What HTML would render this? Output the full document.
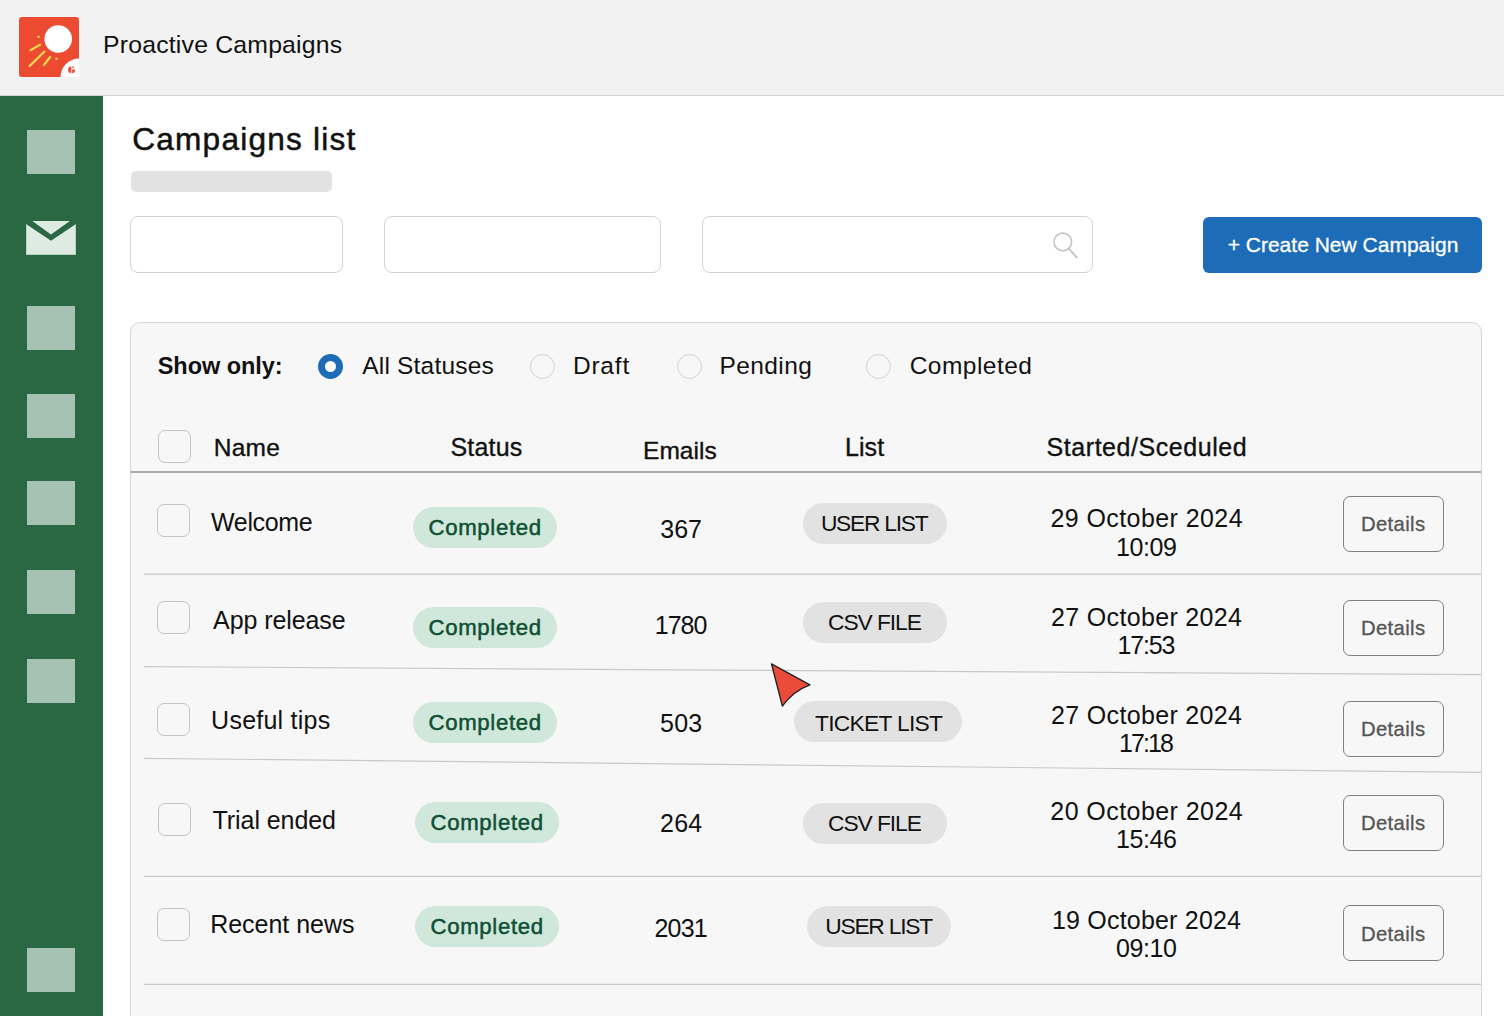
<!DOCTYPE html>
<html><head><meta charset="utf-8"><style>
html,body{margin:0;padding:0;}
body{width:1504px;height:1016px;position:relative;overflow:hidden;background:#fff;font-family:"Liberation Sans",sans-serif;}
body>div{position:absolute;}
.t{white-space:nowrap;line-height:1;}
</style></head><body>
<div style="left:0px;top:0px;width:1504px;height:95px;background:#F2F2F2;"></div>
<div style="left:0px;top:95px;width:1504px;height:1px;background:#D3D3D3;"></div>
<svg style="position:absolute;left:19px;top:17px" width="60" height="60" viewBox="0 0 60 60">
<path d="M3 0 H57 A3 3 0 0 1 60 3 V60 H3 A3 3 0 0 1 0 57 V3 A3 3 0 0 1 3 0 Z" fill="#EC4A31"/>
<circle cx="39.2" cy="22" r="13.8" fill="#fff"/>
<path d="M60 41.5 A18.5 18.5 0 0 0 41.5 60 L60 60 Z" fill="#fff"/>
<g stroke="#FCD94A" stroke-width="2.2" stroke-linecap="round">
<line x1="19.3" y1="19.8" x2="19.7" y2="19.8"/>
<line x1="11.5" y1="33.2" x2="21.2" y2="27.6"/>
<line x1="10.5" y1="49.1" x2="25.3" y2="34.7"/>
<line x1="24.9" y1="48.2" x2="31.2" y2="39.9"/>
<line x1="37.3" y1="41.7" x2="37.7" y2="41.8"/>
</g>
<circle cx="52.6" cy="52.7" r="3.5" fill="#EC4A31"/>
<rect x="52.3" y="48.8" width="0.8" height="8" fill="#fff"/>
<path d="M53.1 50.4 L57 51.2 L57 52.6 L53.1 52.6 Z" fill="#fff"/>
</svg>
<div class="t" style="left:103.00px;top:33.30px;font-size:24.8px;color:#111;letter-spacing:0.194px;">Proactive Campaigns</div>
<div style="left:0px;top:96px;width:103px;height:920px;background:#2A6843;"></div>
<div style="left:27px;top:130px;width:48px;height:44px;background:#A6C2B3;"></div>
<div style="left:27px;top:306px;width:48px;height:44px;background:#A6C2B3;"></div>
<div style="left:27px;top:394px;width:48px;height:44px;background:#A6C2B3;"></div>
<div style="left:27px;top:481px;width:48px;height:44px;background:#A6C2B3;"></div>
<div style="left:27px;top:570px;width:48px;height:44px;background:#A6C2B3;"></div>
<div style="left:27px;top:659px;width:48px;height:44px;background:#A6C2B3;"></div>
<div style="left:27px;top:948px;width:48px;height:44px;background:#A6C2B3;"></div>
<svg style="position:absolute;left:26px;top:220px" width="50" height="36" viewBox="0 0 50 36">
<rect x="0.2" y="1" width="49.6" height="33.8" fill="#DDEBE3"/>
<path d="M0 1 L6.3 1 L25 14.4 L43.9 1 L50 1 L50 4.1 L25 20.8 L0 4.1 Z" fill="#2A6843"/>
</svg>
<div class="t" style="left:132.25px;top:123.54px;font-size:31.6px;color:#111;letter-spacing:1.221px;-webkit-text-stroke:0.5px #111;">Campaigns list</div>
<div style="left:131px;top:171px;width:201px;height:21px;background:#E2E2E2;border-radius:5px;"></div>
<div style="left:130px;top:216px;width:213px;height:57px;box-sizing:border-box;border:1px solid #D2D2D2;border-radius:8px;background:#fff;"></div>
<div style="left:384px;top:216px;width:277px;height:57px;box-sizing:border-box;border:1px solid #D2D2D2;border-radius:8px;background:#fff;"></div>
<div style="left:702px;top:216px;width:391px;height:57px;box-sizing:border-box;border:1px solid #D2D2D2;border-radius:8px;background:#fff;"></div>
<svg style="position:absolute;left:1048px;top:228px" width="34" height="34" viewBox="1048 228 34 34">
<circle cx="1062.8" cy="241.9" r="8.8" fill="none" stroke="#C4C4C4" stroke-width="1.6"/>
<line x1="1068.9" y1="248.6" x2="1077" y2="257.6" stroke="#C4C4C4" stroke-width="1.8" stroke-linecap="round"/>
</svg>
<div style="left:1203px;top:217px;width:279px;height:56px;background:#1D6CB7;border-radius:6px;"></div>
<div class="t" style="left:1227.65px;top:234.22px;font-size:21px;color:#fff;letter-spacing:0.008px;-webkit-text-stroke:0.3px #fff;">+ Create New Campaign</div>
<div style="left:130px;top:322px;width:1352px;height:760px;box-sizing:border-box;border:1px solid #D6D6D6;border-radius:10px;background:#F7F7F7;"></div>
<div class="t" style="left:157.70px;top:355.00px;font-size:23.5px;color:#111;font-weight:bold;letter-spacing:-0.036px;">Show only:</div>
<div style="left:318.0px;top:353.8px;width:25px;height:25px;box-sizing:border-box;border-radius:50%;border:7.6px solid #1D6CB7;background:#fff;"></div>
<div class="t" style="left:362.30px;top:353.86px;font-size:24.5px;color:#111;letter-spacing:0.185px;">All Statuses</div>
<div style="left:530.0px;top:353.8px;width:25px;height:25px;box-sizing:border-box;border-radius:50%;border:1px solid #D2D2D2;background:#F7F7F7;"></div>
<div class="t" style="left:572.90px;top:353.86px;font-size:24.5px;color:#111;letter-spacing:0.802px;">Draft</div>
<div style="left:677.0px;top:353.8px;width:25px;height:25px;box-sizing:border-box;border-radius:50%;border:1px solid #D2D2D2;background:#F7F7F7;"></div>
<div class="t" style="left:719.60px;top:353.86px;font-size:24.5px;color:#111;letter-spacing:0.381px;">Pending</div>
<div style="left:865.9px;top:353.8px;width:25px;height:25px;box-sizing:border-box;border-radius:50%;border:1px solid #D2D2D2;background:#F7F7F7;"></div>
<div class="t" style="left:909.70px;top:353.86px;font-size:24.5px;color:#111;letter-spacing:0.477px;">Completed</div>
<div style="left:158px;top:430px;width:33px;height:33px;box-sizing:border-box;border:1px solid #C4C4C4;border-radius:7px;"></div>
<div class="t" style="left:213.78px;top:435.76px;font-size:24.5px;color:#111;letter-spacing:0.261px;-webkit-text-stroke:0.35px #111;">Name</div>
<div class="t" style="left:450.38px;top:435.33px;font-size:25px;color:#111;letter-spacing:0.215px;-webkit-text-stroke:0.35px #111;">Status</div>
<div class="t" style="left:642.97px;top:438.76px;font-size:24.5px;color:#111;letter-spacing:0.065px;-webkit-text-stroke:0.35px #111;">Emails</div>
<div class="t" style="left:844.88px;top:434.73px;font-size:25px;color:#111;letter-spacing:0.117px;-webkit-text-stroke:0.35px #111;">List</div>
<div class="t" style="left:1046.58px;top:434.73px;font-size:25px;color:#111;letter-spacing:0.550px;-webkit-text-stroke:0.35px #111;">Started/Sceduled</div>
<div style="left:131px;top:471px;width:1350px;height:2px;background:#A9A9A9;"></div>
<div style="left:157px;top:504px;width:33px;height:33px;box-sizing:border-box;border:1px solid #C4C4C4;border-radius:7px;"></div>
<div class="t" style="left:211.10px;top:509.73px;font-size:25px;color:#111;letter-spacing:-0.371px;">Welcome</div>
<div style="left:413px;top:507px;width:144px;height:41px;background:#D0E7DB;border-radius:21px;"></div>
<div class="t" style="left:428.45px;top:516.90px;font-size:22.2px;color:#0F5032;letter-spacing:0.668px;-webkit-text-stroke:0.5px #0F5032;">Completed</div>
<div class="t" style="left:660.25px;top:516.83px;font-size:25px;color:#111;letter-spacing:0.000px;">367</div>
<div style="left:803px;top:503px;width:144px;height:41px;background:#E2E2E2;border-radius:21px;"></div>
<div class="t" style="left:820.90px;top:512.20px;font-size:22.8px;color:#111;letter-spacing:-1.254px;">USER LIST</div>
<div class="t" style="left:1050.40px;top:506.03px;font-size:25px;color:#111;letter-spacing:0.425px;">29 October 2024</div>
<div class="t" style="left:1116.00px;top:534.73px;font-size:25px;color:#111;letter-spacing:-0.412px;">10:09</div>
<div style="left:1343px;top:496px;width:101px;height:56px;box-sizing:border-box;border:1px solid #808080;border-radius:7px;"></div>
<div class="t" style="left:1360.90px;top:514.11px;font-size:20.3px;color:#555555;letter-spacing:0.357px;-webkit-text-stroke:0.3px #555555;">Details</div>
<div style="left:157px;top:601px;width:33px;height:33px;box-sizing:border-box;border:1px solid #C4C4C4;border-radius:7px;"></div>
<div class="t" style="left:213.10px;top:607.73px;font-size:25px;color:#111;letter-spacing:-0.082px;">App release</div>
<div style="left:413px;top:607px;width:144px;height:41px;background:#D0E7DB;border-radius:21px;"></div>
<div class="t" style="left:428.45px;top:617.20px;font-size:22.2px;color:#0F5032;letter-spacing:0.668px;-webkit-text-stroke:0.5px #0F5032;">Completed</div>
<div class="t" style="left:654.80px;top:613.13px;font-size:25px;color:#111;letter-spacing:-1.008px;">1780</div>
<div style="left:803px;top:602px;width:144px;height:41px;background:#E2E2E2;border-radius:21px;"></div>
<div class="t" style="left:828.05px;top:611.20px;font-size:22.8px;color:#111;letter-spacing:-1.067px;">CSV FILE</div>
<div class="t" style="left:1051.05px;top:605.08px;font-size:25px;color:#111;letter-spacing:0.332px;">27 October 2024</div>
<div class="t" style="left:1117.55px;top:633.23px;font-size:25px;color:#111;letter-spacing:-1.188px;">17:53</div>
<div style="left:1343px;top:600px;width:101px;height:56px;box-sizing:border-box;border:1px solid #808080;border-radius:7px;"></div>
<div class="t" style="left:1360.90px;top:618.21px;font-size:20.3px;color:#555555;letter-spacing:0.357px;-webkit-text-stroke:0.3px #555555;">Details</div>
<div style="left:157px;top:703px;width:33px;height:33px;box-sizing:border-box;border:1px solid #C4C4C4;border-radius:7px;"></div>
<div class="t" style="left:211.10px;top:707.73px;font-size:25px;color:#111;letter-spacing:0.240px;">Useful tips</div>
<div style="left:413px;top:702px;width:144px;height:41px;background:#D0E7DB;border-radius:21px;"></div>
<div class="t" style="left:428.45px;top:711.90px;font-size:22.2px;color:#0F5032;letter-spacing:0.668px;-webkit-text-stroke:0.5px #0F5032;">Completed</div>
<div class="t" style="left:660.00px;top:711.33px;font-size:25px;color:#111;letter-spacing:0.250px;">503</div>
<div style="left:794px;top:701px;width:168px;height:41px;background:#E2E2E2;border-radius:21px;"></div>
<div class="t" style="left:815.05px;top:712.20px;font-size:22.8px;color:#111;letter-spacing:-0.724px;">TICKET LIST</div>
<div class="t" style="left:1051.00px;top:702.83px;font-size:25px;color:#111;letter-spacing:0.339px;">27 October 2024</div>
<div class="t" style="left:1119.08px;top:731.03px;font-size:25px;color:#111;letter-spacing:-1.950px;">17:18</div>
<div style="left:1343px;top:701px;width:101px;height:56px;box-sizing:border-box;border:1px solid #808080;border-radius:7px;"></div>
<div class="t" style="left:1360.90px;top:719.21px;font-size:20.3px;color:#555555;letter-spacing:0.357px;-webkit-text-stroke:0.3px #555555;">Details</div>
<div style="left:158px;top:803px;width:33px;height:33px;box-sizing:border-box;border:1px solid #C4C4C4;border-radius:7px;"></div>
<div class="t" style="left:212.60px;top:807.73px;font-size:25px;color:#111;letter-spacing:-0.075px;">Trial ended</div>
<div style="left:415px;top:802px;width:144px;height:41px;background:#D0E7DB;border-radius:21px;"></div>
<div class="t" style="left:430.45px;top:811.90px;font-size:22.2px;color:#0F5032;letter-spacing:0.668px;-webkit-text-stroke:0.5px #0F5032;">Completed</div>
<div class="t" style="left:660.00px;top:811.43px;font-size:25px;color:#111;letter-spacing:0.250px;">264</div>
<div style="left:803px;top:803px;width:144px;height:41px;background:#E2E2E2;border-radius:21px;"></div>
<div class="t" style="left:828.05px;top:811.70px;font-size:22.8px;color:#111;letter-spacing:-1.067px;">CSV FILE</div>
<div class="t" style="left:1050.30px;top:798.53px;font-size:25px;color:#111;letter-spacing:0.439px;">20 October 2024</div>
<div class="t" style="left:1115.95px;top:826.93px;font-size:25px;color:#111;letter-spacing:-0.387px;">15:46</div>
<div style="left:1343px;top:795px;width:101px;height:56px;box-sizing:border-box;border:1px solid #808080;border-radius:7px;"></div>
<div class="t" style="left:1360.90px;top:813.21px;font-size:20.3px;color:#555555;letter-spacing:0.357px;-webkit-text-stroke:0.3px #555555;">Details</div>
<div style="left:157px;top:908px;width:33px;height:33px;box-sizing:border-box;border:1px solid #C4C4C4;border-radius:7px;"></div>
<div class="t" style="left:210.20px;top:912.13px;font-size:25px;color:#111;letter-spacing:-0.022px;">Recent news</div>
<div style="left:415px;top:906px;width:144px;height:41px;background:#D0E7DB;border-radius:21px;"></div>
<div class="t" style="left:430.45px;top:916.10px;font-size:22.2px;color:#0F5032;letter-spacing:0.668px;-webkit-text-stroke:0.5px #0F5032;">Completed</div>
<div class="t" style="left:654.45px;top:916.43px;font-size:25px;color:#111;letter-spacing:-0.775px;">2031</div>
<div style="left:807px;top:906px;width:144px;height:41px;background:#E2E2E2;border-radius:21px;"></div>
<div class="t" style="left:825.15px;top:915.00px;font-size:22.8px;color:#111;letter-spacing:-1.216px;">USER LIST</div>
<div class="t" style="left:1052.00px;top:907.58px;font-size:25px;color:#111;letter-spacing:0.196px;">19 October 2024</div>
<div class="t" style="left:1115.95px;top:936.33px;font-size:25px;color:#111;letter-spacing:-0.387px;">09:10</div>
<div style="left:1343px;top:905px;width:101px;height:56px;box-sizing:border-box;border:1px solid #808080;border-radius:7px;"></div>
<div class="t" style="left:1360.90px;top:923.51px;font-size:20.3px;color:#555555;letter-spacing:0.357px;-webkit-text-stroke:0.3px #555555;">Details</div>
<svg style="position:absolute;left:0;top:0" width="1504" height="1016">
<g stroke="#C9C9C9" stroke-width="1.2" fill="none">
<line x1="144" y1="574.2" x2="1481" y2="574.2"/>
<line x1="144" y1="666.6" x2="1481" y2="674.6"/>
<line x1="144" y1="758.3" x2="1481" y2="772.4"/>
<line x1="144" y1="876.3" x2="1481" y2="876.3"/>
<line x1="144" y1="984.3" x2="1481" y2="984.3"/>
</g>
<path d="M771.5 663.9 L809.9 684.8 Q793 691 782.4 706.1 Z" fill="#EA4B3B" stroke="#222" stroke-width="1.4" stroke-linejoin="round"/>
</svg>
</body></html>
